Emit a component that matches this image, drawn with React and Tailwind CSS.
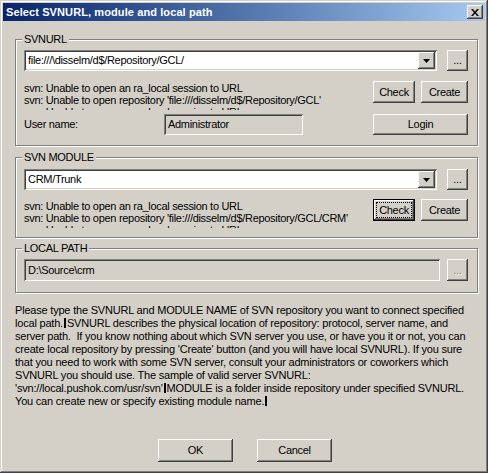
// Select SVNURL dialog (Windows 2000 style)
const raised =
  "bg-[#d4d0c8] shadow-[inset_-1px_-1px_0_#404040,inset_1px_1px_0_#ffffff,inset_-2px_-2px_0_#808080,inset_2px_2px_0_#d4d0c8]";
const sunken =
  "shadow-[inset_1px_1px_0_#808080,inset_-1px_-1px_0_#ffffff,inset_2px_2px_0_#404040,inset_-2px_-2px_0_#d4d0c8]";

function Btn({ children, className = "", disabled, focused }) {
  if (focused) {
    return (
      <div className={"border border-black " + className}>
        <div className={raised + " h-full flex items-center justify-center p-[3px]"}>
          <span className="h-full w-full flex items-center justify-center outline outline-1 outline-dotted outline-black">
            {children}
          </span>
        </div>
      </div>
    );
  }
  return (
    <div
      className={
        raised +
        " flex items-center justify-center " +
        (disabled ? "text-[#808080] [text-shadow:1px_1px_0_#fff] " : "") +
        className
      }
    >
      {children}
    </div>
  );
}

function Combo({ value, className = "" }) {
  return (
    <div className={sunken + " bg-white h-[21px] flex items-center pl-[4px] pr-[2px] " + className}>
      <span className="flex-1">{value}</span>
      <div className={raised + " w-[17px] h-[17px] flex items-center justify-center"}>
        <svg width="7" height="4" viewBox="0 0 7 4">
          <path d="M0 0h7L3.5 4z" fill="#000" />
        </svg>
      </div>
    </div>
  );
}

function Group({ label, children, className = "" }) {
  return (
    <fieldset
      className={
        "border border-[#808080] shadow-[inset_1px_1px_0_#ffffff,1px_1px_0_#ffffff] w-[463px] ml-[15px] " +
        className
      }
    >
      <legend className="ml-[6px] px-[2px] bg-[#d4d0c8] leading-[13px]">{label}</legend>
      {children}
    </fieldset>
  );
}

// status output of the last svn call, only the first lines fit
function ErrorText({ repo }) {
  return (
    <div className="w-[342px] h-[29px] overflow-hidden leading-[12px] pt-[1px]">
      <div>svn: Unable to open an ra_local session to URL</div>
      <div>svn: Unable to open repository '{repo}'</div>
      <div>svn: Unable to open an ra_local session to URL</div>
    </div>
  );
}

const Mark = () => <span className="inline-block w-[2px] h-[10px] bg-black align-[-1px] mx-[1px]" />;

export default function App() {
  return (
    <div className="w-[491px] h-[475px] bg-white text-black text-[11px] font-['Liberation_Sans',Arial,sans-serif] tracking-[-0.3px]">
      <div className="w-[488px] h-[473px] bg-[#d4d0c8] p-[3px] flex flex-col shadow-[inset_-1px_-1px_0_#404040,inset_1px_1px_0_#d4d0c8,inset_-2px_-2px_0_#808080,inset_2px_2px_0_#ffffff]">
        {/* title bar */}
        <div className="h-[18px] bg-linear-to-r from-[#0a246a] to-[#a6caf0] flex items-center pl-[3px] pr-[2px]">
          <span className="flex-1 text-white font-bold tracking-[0.1px]">Select SVNURL, module and local path</span>
          <div className={raised + " w-[16px] h-[14px] flex items-center justify-center"}>
            <svg width="8" height="7" viewBox="0 0 8 7">
              <path d="M0 0h2l2 2.5L6 0h2L5 3.5 8 7H6L4 4.5 2 7H0l3-3.5z" fill="#000" />
            </svg>
          </div>
        </div>

        <div className="-ml-[3px]">
          <Group label="SVNURL" className="mt-[12px]">
            <div className="pl-[8px] pr-[9px] pt-[4px] pb-[10px]">
              <div className="flex items-center gap-[10px]">
                <Combo value="file:///\disselm/d$/Repository/GCL/" className="flex-1" />
                <Btn className="w-[21px] h-[21px]">...</Btn>
              </div>
              <div className="flex mt-[10px]">
                <ErrorText repo="file:///disselm/d$/Repository/GCL" />
                <div className="flex gap-[6px] ml-auto">
                  <Btn className="w-[42px] h-[22px]">Check</Btn>
                  <Btn className="w-[47px] h-[22px]">Create</Btn>
                </div>
              </div>
              <div className="flex items-center mt-[4px]">
                <span className="w-[140px]">User name:</span>
                <div className={sunken + " w-[139px] h-[21px] flex items-center pl-[4px]"}>Administrator</div>
                <Btn className="ml-auto w-[95px] h-[21px]">Login</Btn>
              </div>
            </div>
          </Group>

          <Group label="SVN MODULE" className="mt-[5px]">
            <div className="pl-[8px] pr-[9px] pt-[5px] pb-[9px]">
              <div className="flex items-center gap-[10px]">
                <Combo value="CRM/Trunk" className="flex-1" />
                <Btn className="w-[21px] h-[21px]">...</Btn>
              </div>
              <div className="flex mt-[9px]">
                <ErrorText repo="file:///disselm/d$/Repository/GCL/CRM" />
                <div className="flex gap-[6px] ml-auto">
                  <Btn focused className="w-[42px] h-[22px]">Check</Btn>
                  <Btn className="w-[47px] h-[22px]">Create</Btn>
                </div>
              </div>
            </div>
          </Group>

          <Group label="LOCAL PATH" className="mt-[4px]">
            <div className="pl-[8px] pr-[9px] pt-[4px] pb-[11px] flex items-center gap-[7px]">
              <div className={sunken + " flex-1 h-[22px] flex items-center pl-[4px]"}>D:\Source\crm</div>
              <Btn disabled className="w-[21px] h-[22px]">...</Btn>
            </div>
          </Group>

          <div className="ml-[15px] mt-[11px] leading-[13px] whitespace-nowrap tracking-[-0.2px]">
            <div>Please type the SVNURL and MODULE NAME of SVN repository you want to connect specified</div>
            <div>
              local path.<Mark />SVNURL describes the physical location of repository: protocol, server name, and
            </div>
            <div>server path.&nbsp; If you know nothing about which SVN server you use, or have you it or not, you can</div>
            <div>create local repository by pressing 'Create' button (and you will have local SVNURL). If you sure</div>
            <div>that you need to work with some SVN server, consult your administrators or coworkers which</div>
            <div>SVNURL you should use. The sample of valid server SVNURL:</div>
            <div>
              'svn://local.pushok.com/usr/svn'<Mark />MODULE is a folder inside repository under specified SVNURL.
            </div>
            <div>
              You can create new or specify existing module name.<Mark />
            </div>
          </div>

          <div className="flex mt-[31px] ml-[158px] gap-[24px]">
            <Btn className="w-[75px] h-[23px]">OK</Btn>
            <Btn className="w-[75px] h-[23px]">Cancel</Btn>
          </div>
        </div>
      </div>
    </div>
  );
}
